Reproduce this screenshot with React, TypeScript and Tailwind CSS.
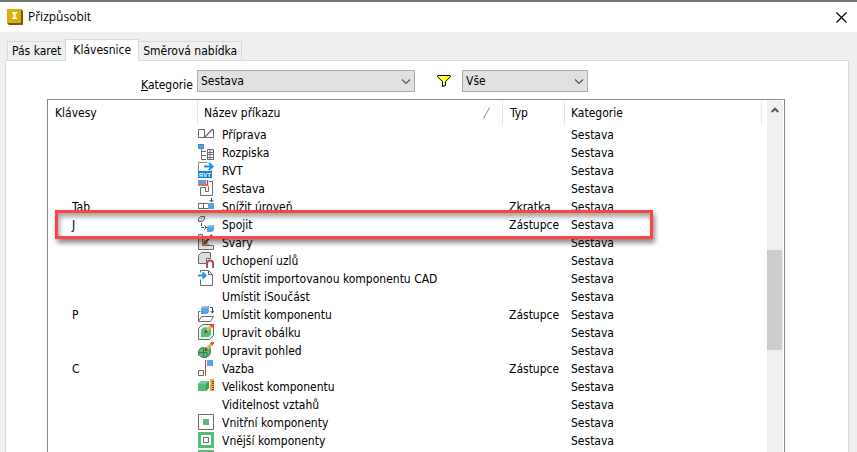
import React, { useState } from 'react';
import clsx from 'clsx';

interface CommandRow {
    keys?: string;
    name: string;
    type?: string;
    icon?: React.ReactNode;
}

const GRAY = '#6a6a6a';
const BLUE = '#5aa2e0';
const GREEN = '#57bb7c';
const RED = '#d8383c';

const Icon: React.FC<{ children: React.ReactNode }> = ({ children }) => (
    <svg width="16" height="16" viewBox="0 0 16 16" fill="none" aria-hidden="true">
        {children}
    </svg>
);

const PrepareIcon = (
    <Icon>
        <path d="M.5 3.500h6v8h-6zM6.500 11.500h9v-8h-2" stroke={GRAY} />
        <path d="M6.500 11.500l8-8.500" stroke={GRAY} strokeWidth="1.300" />
    </Icon>
);

const PartsListIcon = (
    <Icon>
        <path d="M.5.5h5v4h-5z" fill={BLUE} stroke="#4689c4" />
        <path d="M3.500 5v10.500H8M3.500 7.500H8M3.500 11.500H8" stroke={GRAY} />
        <path d="M9.500 5.500h6v10h-6zM9 8.500h7M9 10.500h7M9 13.500h7M12 5.500v10" stroke={GRAY} />
    </Icon>
);

const RvtIcon = (
    <Icon>
        <path d="M.5 9V.5H9M13.500 8v2" stroke="#8a8a8a" />
        <path d="M6 4.500h8M11 1l3.500 3.500L11 8" stroke="#1f8fe5" strokeWidth="2" />
        <path d="M0 9h14v7H0z" fill="#1583d8" />
        <text x="7" y="15" fill="#fff" fontSize="6" fontWeight="bold" textAnchor="middle" fontFamily="Liberation Sans, sans-serif">RVT</text>
    </Icon>
);

const AssemblyIcon = (
    <Icon>
        <path d="M0 0h8v4H0z" fill={BLUE} />
        <path d="M11 1.500h3.500v14h-12v-8h5v4h3v-5" stroke={GRAY} />
        <path d="M0 5h9.500V0" stroke={RED} strokeWidth="1.500" />
    </Icon>
);

const DemoteIcon = (
    <Icon>
        <path d="M.5 5.500h10v5H.5zM5.500 5.500v5" stroke={GRAY} />
        <path d="M10 5h6v6h-6z" fill={BLUE} />
        <path d="M13.500 0v4M11.500 2l2 2 2-2" stroke="#444" />
    </Icon>
);

const JoinIcon = (
    <Icon>
        <path d="M.5 2.500l2-2h4v3l-2 2h-4z" fill="#d6d6d6" stroke={GRAY} />
        <path d="M3.500 7v4.500H9M6.500 9.500l2 2-2 2" stroke="#444" strokeDasharray="3 1" />
        <path d="M9 11l2-2h5v5l-2 2H9z" fill={BLUE} />
        <path d="M11 9h5l-2 2H9z" fill="#8cc0ee" />
    </Icon>
);

const WeldIcon = (
    <Icon>
        <path d="M.5.5h4v11h11v4H.5z" fill="#e4e4e4" stroke={GRAY} />
        <path d="M5 4l7 7H5z" fill="#eb9b3c" />
        <path d="M6 10l8-9" stroke="#5b4a3a" strokeWidth="2" />
    </Icon>
);

const SnapIcon = (
    <Icon>
        <path d="M.5 11.500v-8l3-3h9v6h-4v5z" fill="#dcdcdc" stroke={GRAY} />
        <path d="M9 15v-3.500a3 3 0 0 1 6 0V15" stroke="#b8474a" strokeWidth="2" />
        <path d="M8 14h2v2H8zM14 14h2v2h-2z" fill="#777" />
    </Icon>
);

const ImportIcon = (
    <Icon>
        <path d="M2.500 2.500v-2h8l4 4v11h-12v-6M10.500.5v4h4" stroke={GRAY} />
        <path d="M0 5.500h7M4.500 2.500l3 3-3 3" stroke="#1f8fe5" strokeWidth="2" />
    </Icon>
);

const PlaceIcon = (
    <Icon>
        <path d="M.5 15.500v-10h2M.5 15.500l3-5h12l-3 5z" stroke={GRAY} />
        <path d="M3 2l2-2h6v6L9 8H3z" fill={BLUE} />
        <path d="M3 2l2-2h6L9 2z" fill="#8cc0ee" />
        <path d="M12 1.500h2.500V7M12.500 5l2 2 1-2" stroke="#444" />
    </Icon>
);

const PencilPath = (
    <>
        <path d="M8.500 7l5-5" stroke="#f0b23c" strokeWidth="3" />
        <path d="M13 2.500L15.500 0" stroke="#e2494c" strokeWidth="3" />
        <path d="M6.500 9l1-3.500L10 8z" fill="#55433a" />
    </>
);

const EditEnvelopeIcon = (
    <Icon>
        <path d="M.5 4.500l4-4h11v11l-4 4H.5z" fill="#e6f5eb" stroke={GRAY} />
        <path d="M3 6l2.500-2.500H13v7L10.500 13H3z" fill={GREEN} />
        {PencilPath}
    </Icon>
);

const EditViewIcon = (
    <Icon>
        <path d="M1 8l3-3h9v6l-3 4H4l-3-2z" fill={GREEN} />
        <path d="M.5 9.500a5 5 0 0 1 4-4M.5 9v4l4 2.500h4l3.500-3V8M1 10.500h8v4.500M5.500 6v9" stroke="#47715a" />
        {PencilPath}
    </Icon>
);

const ConstraintIcon = (
    <Icon>
        <path d="M.5 10.500h5v5h-5z" stroke={GRAY} />
        <path d="M7.500 0v16" stroke={RED} />
        <path d="M9 0h6v6H9z" fill={BLUE} />
    </Icon>
);

const SizeIcon = (
    <Icon>
        <path d="M0 6l3-3h8v7l-3 3H0z" fill={GREEN} />
        <path d="M0 6l3-3h8L8 6z" fill="#79cd98" />
        <path d="M8 6l3-3v7l-3 3z" fill="#3c9d62" />
        <path d="M12 1h4v12h-4z" fill="#eda63a" />
        <path d="M14 3.500h2M14 5.500h2M14 7.500h2M14 9.500h2M14 11.500h2" stroke="#6f4b1a" />
    </Icon>
);

const InnerIcon = (
    <Icon>
        <path d="M.5.5h15v15H.5z" stroke={GRAY} />
        <path d="M5 5h6v6H5z" fill={GREEN} />
    </Icon>
);

const OuterIcon = (
    <Icon>
        <path d="M0 0h16v16H0z" fill={GREEN} />
        <path d="M3 3h10v10H3z" fill="#fff" />
        <path d="M5.500 5.500h5v5h-5z" stroke={GRAY} />
    </Icon>
);

const rows: CommandRow[] = [
    { name: 'Příprava', icon: PrepareIcon },
    { name: 'Rozpiska', icon: PartsListIcon },
    { name: 'RVT', icon: RvtIcon },
    { name: 'Sestava', icon: AssemblyIcon },
    { keys: 'Tab', name: 'Snížit úroveň', type: 'Zkratka', icon: DemoteIcon },
    { keys: 'J', name: 'Spojit', type: 'Zástupce', icon: JoinIcon },
    { name: 'Svary', icon: WeldIcon },
    { name: 'Uchopení uzlů', icon: SnapIcon },
    { name: 'Umístit importovanou komponentu CAD', icon: ImportIcon },
    { name: 'Umístit iSoučást' },
    { keys: 'P', name: 'Umístit komponentu', type: 'Zástupce', icon: PlaceIcon },
    { name: 'Upravit obálku', icon: EditEnvelopeIcon },
    { name: 'Upravit pohled', icon: EditViewIcon },
    { keys: 'C', name: 'Vazba', type: 'Zástupce', icon: ConstraintIcon },
    { name: 'Velikost komponentu', icon: SizeIcon },
    { name: 'Viditelnost vztahů' },
    { name: 'Vnitřní komponenty', icon: InnerIcon },
    { name: 'Vnější komponenty', icon: OuterIcon },
];

const tabs = ['Pás karet', 'Klávesnice', 'Směrová nabídka'];

interface DropdownProps {
    id: string;
    label?: string;
    options: string[];
    className: string;
}

const Dropdown: React.FC<DropdownProps> = ({ id, label, options, className }) => (
    <div className={clsx('relative h-[22px]', className)}>
        <select
            id={id}
            aria-label={label}
            className="block h-full w-full appearance-none border border-[#adadad] bg-[#e1e1e1] pl-[3px] leading-5 outline-none"
        >
            {options.map(option => <option key={option}>{option}</option>)}
        </select>
        <svg className="pointer-events-none absolute right-1 top-2 h-[7px] w-[10px]" viewBox="0 0 10 7" fill="none">
            <path d="M1 1.500l4 4 4-4" stroke="#555" strokeWidth="1.200" />
        </svg>
    </div>
);

const HeaderCell: React.FC<{ children: React.ReactNode; className?: string }> = ({ children, className }) => (
    <th className="h-[26px] p-0 font-normal">
        <div className={clsx('flex h-6 items-center justify-between border-r border-[#e5e5e5]', className)}>
            {children}
        </div>
    </th>
);

const CommandTable: React.FC = () => (
    <div className="relative min-w-0 flex-1">
        <table className="w-full table-fixed border-collapse text-left leading-[18px]">
            <colgroup>
                <col className="w-[150px]" />
                <col className="w-[305px]" />
                <col className="w-[62px]" />
                <col />
            </colgroup>
            <thead>
                <tr>
                    <HeaderCell className="pl-[7px]">Klávesy</HeaderCell>
                    <HeaderCell className="pl-1.5 pr-3">
                        Název příkazu
                        <svg width="7" height="12" viewBox="0 0 7 12" fill="none">
                            <path d="M.5 11.500l6-11" stroke="#8a8a8a" />
                        </svg>
                    </HeaderCell>
                    <HeaderCell className="pl-[7px]">Typ</HeaderCell>
                    <HeaderCell className="mr-[5px] pl-1.5">Kategorie</HeaderCell>
                </tr>
            </thead>
            <tbody>
                {rows.map(row => (
                    <tr key={row.name} className="h-[18px]">
                        <td className="p-0 pl-6">{row.keys}</td>
                        <td className="p-0">
                            <div className="flex h-[18px] gap-2 whitespace-nowrap">
                                <span className="w-4">{row.icon}</span>
                                {row.name}
                            </div>
                        </td>
                        <td className="p-0 pl-1.5">{row.type}</td>
                        <td className="p-0 pl-1.5">Sestava</td>
                    </tr>
                ))}
                <tr className="h-[18px]">
                    <td className="p-0" />
                    <td className="p-0 align-top">{OuterIcon}</td>
                    <td className="p-0" />
                    <td className="p-0" />
                </tr>
            </tbody>
        </table>
        {/* Marker around the "Spojit" shortcut */}
        <div className="pointer-events-none absolute left-[7px] right-[114px] top-[110px] h-[29px] border-3 border-[#ff4343] shadow-[2px_4px_5px_rgba(0,0,0,0.45),inset_2px_4px_5px_rgba(0,0,0,0.35)]" />
    </div>
);

const ScrollBar: React.FC = () => (
    <div className="mr-px mt-px flex w-4 shrink-0 flex-col bg-[#f0f0f0]">
        <button aria-label="Nahoru" className="flex h-[18px] w-full items-center justify-center">
            <svg width="8" height="6" viewBox="0 0 8 6" fill="none">
                <path d="M.7 5L4 1.700 7.300 5" stroke="#555" strokeWidth="2" />
            </svg>
        </button>
        <div className="mt-[131px] h-[100px] w-[15px] bg-[#cdcdcd]" />
    </div>
);

const App: React.FC = () => {
    const [activeTab, setActiveTab] = useState('Klávesnice');

    return (
        <div className="flex h-screen flex-col overflow-hidden bg-[#efefef] font-['DejaVu_Sans_Condensed','DejaVu_Sans',sans-serif] text-[12px] text-black">
            <header className="flex h-8 shrink-0 items-center justify-between border-t-2 border-[#777] bg-white pl-[7px] pr-[10px] font-['Open_Sans',sans-serif]">
                <div className="flex items-center gap-[5px]">
                    <svg width="16" height="16" viewBox="0 0 16 16">
                        <path d="M0 0h14l2 2v14H2l-2-2z" fill="#7a5c00" />
                        <path d="M0 0h14v14H0z" fill="#dcae09" />
                        <path d="M5 3h5v1.500H8.500v4H10V10H5V8.500h1.500v-4H5z" fill="#fff" />
                    </svg>
                    <h1>Přizpůsobit</h1>
                </div>
                <button aria-label="Zavřít">
                    <svg width="11" height="11" viewBox="0 0 11 11">
                        <path d="M.5.5l10 10M10.500.5l-10 10" stroke="#000" strokeWidth="1.200" />
                    </svg>
                </button>
            </header>

            <div role="tablist" className="flex shrink-0 items-end pl-[7px] pt-[7px]">
                {tabs.map(tab => (
                    <button
                        key={tab}
                        role="tab"
                        aria-selected={tab === activeTab}
                        onClick={() => setActiveTab(tab)}
                        className={clsx(
                            'border border-b-0 border-[#d9d9d9] whitespace-nowrap',
                            tab === activeTab
                                ? 'relative -mx-px -mb-px h-[22px] bg-white px-[7px] pb-0.5'
                                : 'h-[19px] bg-[#f0f0f0] px-1'
                        )}
                    >
                        {tab}
                    </button>
                ))}
            </div>

            <main className="ml-[5px] mr-2 flex min-h-0 flex-1 flex-col border border-b-0 border-[#d9d9d9] bg-white pt-[9px]">
                <div className="flex shrink-0 items-start pl-[135px]">
                    <label htmlFor="category" className="w-14 pt-1.5 leading-[18px]">
                        <span className="underline">K</span>ategorie
                    </label>
                    <Dropdown id="category" options={['Sestava', 'Součást', 'Výkres']} className="w-[218px]" />
                    <svg className="ml-[22px] mt-[5px]" width="14" height="12" viewBox="0 0 14 12" aria-hidden="true">
                        <path d="M.7.5h12.600v1.500L8.500 6.500v4l-3 1v-5L.7 2z" fill="#ffff00" stroke="#000" />
                        <path d="M3 2.500h3M6.500 5v4" stroke="#fff" />
                    </svg>
                    <Dropdown id="filter" label="Filtr" options={['Vše', 'Přiřazeno']} className="ml-[11px] w-[126px]" />
                </div>

                <div className="ml-[41px] mr-[63px] mt-[5px] flex min-h-0 flex-1 overflow-hidden border border-b-0 border-[#828790]">
                    <CommandTable />
                    <ScrollBar />
                </div>
            </main>
        </div>
    );
};

export default App;
